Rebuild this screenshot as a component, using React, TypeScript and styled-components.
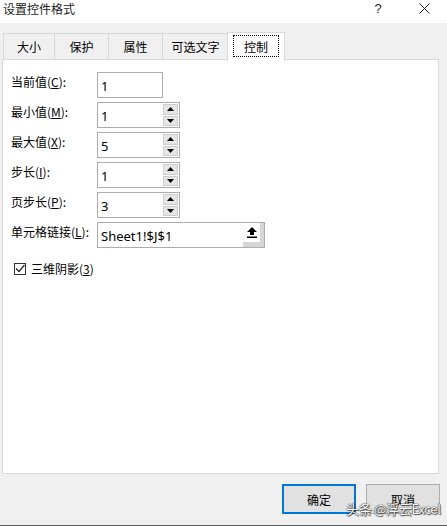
import React from 'react';
import styled, { createGlobalStyle } from 'styled-components';

const GlobalStyle = createGlobalStyle`
  html, body {
    margin: 0;
    padding: 0;
    background: #f0f0f0;
  }
  * {
    box-sizing: border-box;
  }
`;

const Window = styled.div`
  position: relative;
  width: 447px;
  height: 526px;
  display: flex;
  flex-direction: column;
  background: #f0f0f0;
  border-bottom: 1px solid #5c5c5c;
  font-family: "Noto Sans CJK SC", "Noto Sans", sans-serif;
  font-size: 12px;
  color: #000;
  overflow: hidden;
`;

const TitleBar = styled.div`
  height: 23px;
  background: #fff;
  display: flex;
  align-items: center;
  padding-left: 3px;
`;

const TitleText = styled.div`
  flex: 1;
  font-size: 12px;
  line-height: 16px;
  margin-top: -5px;
  color: #1a1a1a;
`;

const TitleButton = styled.div<{ $w: number }>`
  width: ${(p) => p.$w}px;
  height: 23px;
  display: flex;
  align-items: center;
  justify-content: center;
  margin-top: -6px;
  font-family: "Liberation Sans", sans-serif;
  font-size: 13px;
  color: #222;
`;

const TabStrip = styled.div`
  display: flex;
  align-items: flex-start;
  height: 29px;
  margin: 9px 0 -2px 3px;
  position: relative;
  z-index: 1;
`;

const Tab = styled.div<{ $w: number; $active?: boolean }>`
  width: ${(p) => p.$w}px;
  height: ${(p) => (p.$active ? 29 : 26)}px;
  margin-top: ${(p) => (p.$active ? 0 : 1)}px;
  margin-left: ${(p) => (p.$active ? -2 : -1)}px;
  border: 1px solid #d9d9d9;
  border-bottom: none;
  background: ${(p) => (p.$active ? '#fff' : '#f0f0f0')};
  display: flex;
  align-items: center;
  justify-content: center;
  font-size: 12px;
  padding-bottom: ${(p) => (p.$active ? 2 : 0)}px;

  &:first-child {
    margin-left: 0;
  }
`;

const FocusRect = styled.span`
  border: 1px dotted #000;
  width: 46px;
  height: 22px;
  display: flex;
  align-items: center;
  justify-content: center;
`;

const Panel = styled.div`
  margin-left: 2px;
  width: 437px;
  height: 415px;
  background: #fff;
  border: 1px solid #d9d9d9;
  padding: 12px 0 0 8px;
  display: flex;
  flex-direction: column;
  gap: 4px;
`;

const Row = styled.div`
  display: flex;
  align-items: flex-start;
  height: 26px;
`;

const Label = styled.div`
  width: 86px;
  padding-top: 2px;
  font-size: 12px;
  line-height: 16px;
  white-space: nowrap;
`;

const U = styled.span`
  text-decoration: underline;
`;

const Field = styled.div<{ $w: number }>`
  width: ${(p) => p.$w}px;
  height: 26px;
  border: 1px solid #adadad;
  background: #fff;
  display: flex;
  align-items: stretch;
`;

const FieldText = styled.div`
  flex: 1;
  padding: 1px 0 0 3px;
  display: flex;
  align-items: center;
  font-family: "Noto Sans", "Liberation Sans", sans-serif;
  font-size: 13px;
`;

const Spin = styled.div`
  width: 15px;
  margin: 1px 1px 1px 0;
  display: flex;
  flex-direction: column;
  gap: 1px;
`;

const SpinButton = styled.div`
  flex: 1;
  background: #e5e5e5;
  border: 1px solid #cfcfcf;
  display: flex;
  align-items: center;
  justify-content: center;
`;

const RefButton = styled.div`
  width: 21px;
  background: #fff;
  border-right: 4px solid #d6d6d6;
  border-bottom: 5px solid #d6d6d6;
  display: flex;
  align-items: center;
  justify-content: center;
`;

const CheckRow = styled.div`
  display: flex;
  align-items: center;
  gap: 5px;
  margin-top: 8px;
  margin-left: 3px;
  font-size: 12px;
`;

const CheckBox = styled.div`
  width: 12px;
  height: 12px;
  border: 1px solid #333;
  background: #fff;
  display: flex;
  align-items: center;
  justify-content: center;
`;

const Footer = styled.div`
  display: flex;
  justify-content: flex-end;
  gap: 10px;
  padding: 10px 7px 0 0;
`;

const Button = styled.div<{ $primary?: boolean }>`
  width: 74px;
  height: 30px;
  background: #e1e1e1;
  border: ${(p) => (p.$primary ? '2px solid #0078d7' : '1px solid #adadad')};
  display: flex;
  align-items: center;
  justify-content: center;
  font-size: 12px;
`;

const Watermark = styled.div`
  position: absolute;
  left: 346px;
  top: 499px;
  font-family: "Noto Sans CJK SC", "Noto Sans", sans-serif;
  font-size: 13px;
  color: #fff;
  text-shadow: 0 0 1px #222, 0 0 1px #222, 1px 1px 1px rgba(0, 0, 0, 0.6);
  white-space: nowrap;
  letter-spacing: -0.3px;
`;

const Tri = ({ up }: { up?: boolean }) => (
  <svg width="7" height="4" viewBox="0 0 7 4">
    <polygon points={up ? '3.5,0 7,4 0,4' : '0,0 7,0 3.5,4'} fill="#000" />
  </svg>
);

const SpinField = ({ value }: { value: string }) => (
  <Field $w={83}>
    <FieldText>{value}</FieldText>
    <Spin>
      <SpinButton>
        <Tri up />
      </SpinButton>
      <SpinButton>
        <Tri />
      </SpinButton>
    </Spin>
  </Field>
);

const tabs = [
  { name: '大小', w: 52 },
  { name: '保护', w: 55 },
  { name: '属性', w: 55 },
  { name: '可选文字', w: 67 },
];

export default function App() {
  return (
    <Window>
      <GlobalStyle />
      <TitleBar>
        <TitleText>设置控件格式</TitleText>
        <TitleButton $w={46}>?</TitleButton>
        <TitleButton $w={46}>
          <svg width="11" height="11" viewBox="0 0 11 11">
            <path d="M0.5 0.5 L10.5 10.5 M10.5 0.5 L0.5 10.5" stroke="#222" strokeWidth="1" />
          </svg>
        </TitleButton>
      </TitleBar>

      <TabStrip>
        {tabs.map((t) => (
          <Tab key={t.name} $w={t.w}>
            {t.name}
          </Tab>
        ))}
        <Tab $w={58} $active>
          <FocusRect>控制</FocusRect>
        </Tab>
      </TabStrip>

      <Panel>
        <Row>
          <Label>
            当前值(<U>C</U>):
          </Label>
          <Field $w={66}>
            <FieldText>1</FieldText>
          </Field>
        </Row>
        <Row>
          <Label>
            最小值(<U>M</U>):
          </Label>
          <SpinField value="1" />
        </Row>
        <Row>
          <Label>
            最大值(<U>X</U>):
          </Label>
          <SpinField value="5" />
        </Row>
        <Row>
          <Label>
            步长(<U>I</U>):
          </Label>
          <SpinField value="1" />
        </Row>
        <Row>
          <Label>
            页步长(<U>P</U>):
          </Label>
          <SpinField value="3" />
        </Row>
        <Row>
          <Label>
            单元格链接(<U>L</U>):
          </Label>
          <Field $w={168}>
            <FieldText>Sheet1!$J$1</FieldText>
            <RefButton>
              <svg width="10" height="11" viewBox="0 0 10 11">
                <polygon points="5,0 10,5 7,5 7,8 3,8 3,5 0,5" fill="#000" />
                <rect x="0" y="9.5" width="10" height="1.5" fill="#000" />
              </svg>
            </RefButton>
          </Field>
        </Row>
        <CheckRow>
          <CheckBox>
            <svg width="10" height="9" viewBox="0 0 10 9">
              <path d="M1 4.5 L4 7.5 L9.5 1" stroke="#222" strokeWidth="1.2" fill="none" />
            </svg>
          </CheckBox>
          <span>
            三维阴影(<U>3</U>)
          </span>
        </CheckRow>
      </Panel>

      <Footer>
        <Button $primary>确定</Button>
        <Button>取消</Button>
      </Footer>

      <Watermark>头条 @浮云Excel</Watermark>
    </Window>
  );
}
